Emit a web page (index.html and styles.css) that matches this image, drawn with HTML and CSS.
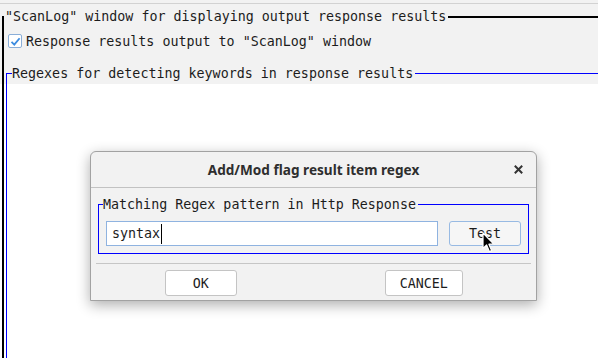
FILE: index.html
```html
<!DOCTYPE html>
<html>
<head>
	<title>ScanLog regex</title>
	<link rel="stylesheet" href="styles.css">
</head>
<body>
<div class="topline"></div>

<fieldset class="box box-out">
	<legend>"ScanLog" window for displaying output response results</legend>
	<label class="check"><span class="tick"><svg width="11" height="11" viewBox="0 0 11 11"><path d="M1.5 5.8 L4.3 8.6 L9.6 2.2" fill="none" stroke="#3c8ce0" stroke-width="1.8"/></svg></span><span>Response results output to "ScanLog" window</span></label>
	<fieldset class="box box-in">
		<legend>Regexes for detecting keywords in response results</legend>
	</fieldset>
</fieldset>

<div class="dialog">
	<div class="dlg-title">
		<span></span>
		<span class="dlg-name">Add/Mod flag result item regex</span>
		<span class="close"><svg width="9" height="9" viewBox="0 0 9 9"><path d="M0.8 0.8 L8.2 8.2 M8.2 0.8 L0.8 8.2" stroke="#333" stroke-width="2"/></svg></span>
	</div>
	<fieldset class="box box-dlg">
		<legend>Matching Regex pattern in Http Response</legend>
		<div class="row">
			<div class="input">syntax<span class="caret"></span></div>
			<button class="btn btn-test">Test</button>
		</div>
	</fieldset>
	<div class="sep"></div>
	<div class="dlg-foot">
		<button class="btn btn-ok">OK</button>
		<button class="btn btn-cancel">CANCEL</button>
	</div>
	<svg class="pointer" width="13" height="21" viewBox="0 0 13 21"><path d="M1 1 L1 16.5 L4.6 13 L7.4 19.5 L9.6 18.6 L6.9 12.2 L11.8 12.2 Z" fill="#000" stroke="#fff" stroke-width="1.2" stroke-linejoin="round"/></svg>
</div>
</body>
</html>
```

FILE: styles.css
```css
* {
	box-sizing: border-box;
}
body {
	margin: 0;
	height: 358px;
	overflow: hidden;
	position: relative;
	font-family: "DejaVu Sans Mono", monospace;
	font-size: 13.33px;
	color: #1c1c1c;
	background: linear-gradient(#f2f2f2 84px, #fff 84px);
}
.topline {
	height: 4px;
	border-bottom: 1px solid #d2d2d2;
}

/* titled borders */
.box {
	margin: 0;
	padding: 0;
	min-width: 0;
}
.box legend {
	padding: 0 2px 0 1px;
	line-height: 15px;
}
.box-out {
	margin: 5px -20px 0 2px;
	border: 2px solid #000;
	border-bottom: 0;
	height: 349px;
}
.box-out > legend {
	line-height: 16px;
}
.box-in {
	margin: 17px 0 0 2px;
	border: 1px solid #00f;
	border-bottom: 0;
	height: 292px;
}
.box-in > legend {
	margin-left: 5px;
	padding-left: 0;
}

.check {
	display: flex;
	align-items: center;
	height: 16px;
	margin-top: 8px;
	padding-left: 4px;
	gap: 4px;
}
.tick {
	flex: none;
	width: 14px;
	height: 14px;
	border: 1px solid #8aaed8;
	border-radius: 2px;
	background: #fff;
	display: flex;
	align-items: center;
	justify-content: center;
}

/* dialog */
.dialog {
	position: absolute;
	left: 90px;
	top: 151px;
	width: 447px;
	height: 150px;
	background: #f2f2f2;
	border: 1px solid #a2a2a2;
	border-radius: 6px 6px 0 0;
	box-shadow: 0 4px 14px rgba(0, 0, 0, 0.32);
}
.dlg-title {
	display: grid;
	grid-template-columns: 36px 1fr 36px;
	align-items: center;
	height: 36px;
	border-bottom: 1px solid #c2c2c2;
}
.dlg-name {
	text-align: center;
	font-family: "Noto Sans", sans-serif;
	font-weight: bold;
	font-size: 13.6px;
	color: #2e2e2e;
}
.close {
	display: flex;
	justify-content: center;
}
.box-dlg {
	margin: 9px 7px 0 7px;
	border: 1px solid #00f;
	padding: 0 7px 7px 7px;
}
.box-dlg > legend {
	margin-left: -3px;
	padding: 0 2px 0 0;
}
.row {
	display: flex;
	gap: 11px;
	margin-top: 9px;
}
.input {
	flex: 1;
	height: 25px;
	border: 1px solid #8fb3e0;
	background: #fff;
	padding-left: 5px;
	display: flex;
	align-items: center;
}
.caret {
	width: 1px;
	height: 20px;
	background: #000;
	margin-left: 1px;
}
.btn {
	font-family: "DejaVu Sans Mono", monospace;
	font-size: 13.33px;
	color: #1c1c1c;
	border-radius: 3px;
	padding: 0;
	background: #fff;
	border: 1px solid #c4c4c4;
	height: 26px;
}
.btn-test {
	width: 72px;
	height: 25px;
	background: #f6f6f6;
	border-color: #98bae3;
}
.sep {
	margin: 9px 5px 0;
	border-top: 1px solid #c6c6c6;
}
.dlg-foot {
	display: grid;
	grid-template-columns: 1fr 1fr;
	justify-items: center;
	padding-top: 6px;
}
.btn-ok {
	width: 72px;
	margin-right: 3px;
}
.btn-cancel {
	width: 78px;
	margin-right: 2px;
}
.pointer {
	position: absolute;
	left: 391px;
	top: 80px;
}
```
